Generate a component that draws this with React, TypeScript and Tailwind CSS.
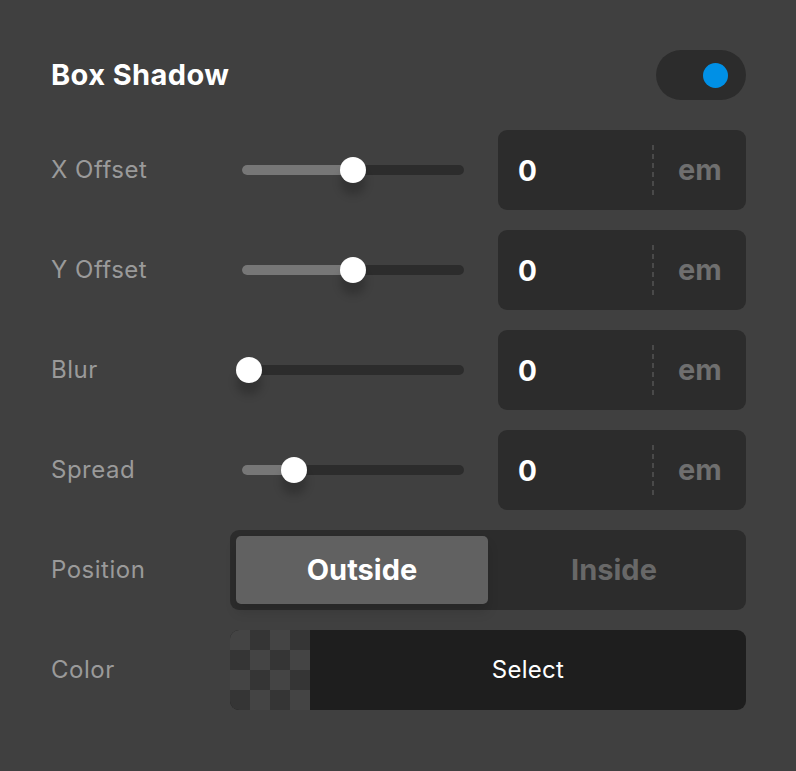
import React from 'react'

const rows = [
  { label: 'X Offset', value: 0.5 },
  { label: 'Y Offset', value: 0.5 },
  { label: 'Blur', value: 0 },
  { label: 'Spread', value: 0.215 },
]

function Slider({ value }: { value: number }) {
  const left = -6 + value * 208
  return (
    <div className="relative ml-[12px] h-[10px] w-[222px] rounded-full bg-[#2c2c2c]">
      <div
        className="absolute left-0 top-0 h-[10px] rounded-full bg-[#777777]"
        style={{ width: left + 13 }}
      />
      <div
        className="absolute top-[-8px] h-[26px] w-[26px] rounded-full bg-white shadow-[0_12px_8px_rgba(0,0,0,0.2)]"
        style={{ left }}
      />
    </div>
  )
}

function NumberInput() {
  return (
    <div className="flex h-[80px] w-[248px] items-center rounded-[9px] bg-[#2c2c2c]">
      <span className="w-[154px] pl-[20px] pt-[2px] text-[28px] font-bold text-white">0</span>
      <div className="h-[50px] w-[2px] bg-[repeating-linear-gradient(to_bottom,#4a4a4a_0,#4a4a4a_5px,transparent_5px,transparent_9px)]" />
      <span className="flex-1 pl-[24px] text-[29px] font-bold text-[#6f6f6f]">em</span>
    </div>
  )
}

export default function App() {
  return (
    <main
      className="min-h-[771px] w-[796px] bg-[#404040] pl-[51px] pr-[50px] pt-[50px]"
      style={{ fontFamily: 'Inter, "Noto Sans", sans-serif' }}
    >
      {/* Header */}
      <div className="mb-[30px] flex h-[50px] items-center justify-between">
        <h1 className="text-[29px] font-bold tracking-[0.4px] text-white">Box Shadow</h1>
        <div className="flex h-[50px] w-[90px] items-center justify-end rounded-full bg-[#2c2c2c] pr-[18px]">
          <div className="h-[25px] w-[25px] rounded-full bg-[#0090e6]" />
        </div>
      </div>

      <div className="flex flex-col gap-[20px]">
        {rows.map((row) => (
          <div key={row.label} className="flex h-[80px] items-center">
            <span className="w-[179px] text-[24px] tracking-[0.5px] text-[#9a9a9a]">{row.label}</span>
            <div className="flex w-[268px] items-center">
              <Slider value={row.value} />
            </div>
            <NumberInput />
          </div>
        ))}

        {/* Position */}
        <div className="flex h-[80px] items-center">
          <span className="w-[179px] text-[24px] tracking-[0.5px] text-[#9a9a9a]">Position</span>
          <div className="flex h-[80px] flex-1 rounded-[9px] bg-[#2c2c2c] p-[6px]">
            <button className="flex-1 rounded-[5px] bg-[#616161] text-[29px] font-bold text-white shadow-[0_8px_12px_rgba(0,0,0,0.12)]">
              Outside
            </button>
            <button className="flex-1 text-[29px] font-bold text-[#686868]">Inside</button>
          </div>
        </div>

        {/* Color */}
        <div className="flex h-[80px] items-center">
          <span className="w-[179px] text-[24px] tracking-[0.5px] text-[#9a9a9a]">Color</span>
          <div className="flex h-[80px] flex-1 overflow-hidden rounded-[9px] bg-[#1e1e1e]">
            <div className="grid h-[80px] w-[80px] grid-cols-4 grid-rows-4">
              {Array.from({ length: 16 }).map((_, i) => {
                const dark = (Math.floor(i / 4) + (i % 4)) % 2 === 1
                return <div key={i} className={dark ? 'bg-[#353535]' : 'bg-[#444444]'} />
              })}
            </div>
            <div className="flex flex-1 items-center justify-center text-[24px] tracking-[0.3px] text-white">
              Select
            </div>
          </div>
        </div>
      </div>
    </main>
  )
}
